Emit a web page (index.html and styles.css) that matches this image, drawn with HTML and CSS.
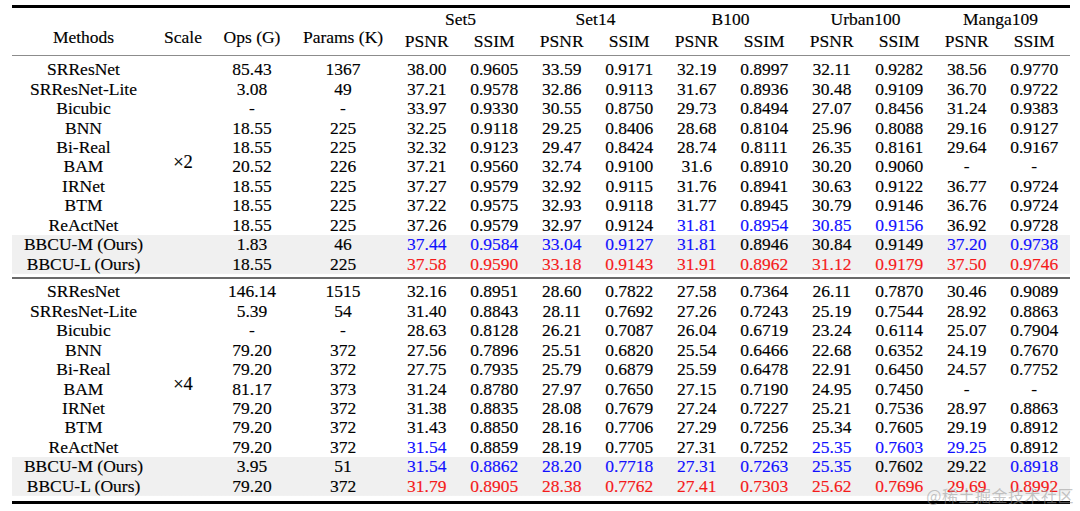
FILE: index.html
```html
<!DOCTYPE html>
<html>
<head>
<meta charset="utf-8">
<link rel="stylesheet" href="styles.css">
</head>
<body>
<div class="page">
  <div class="table">
    <div class="head">
      <div class="hcell h-left c1">Methods</div>
      <div class="hcell h-left c2">Scale</div>
      <div class="hcell h-left c3">Ops (G)</div>
      <div class="hcell h-left c4">Params (K)</div>
      <div class="grp">Set5</div>
      <div class="grp">Set14</div>
      <div class="grp">B100</div>
      <div class="grp">Urban100</div>
      <div class="grp">Manga109</div>
      <div class="sub">PSNR</div><div class="sub">SSIM</div>
      <div class="sub">PSNR</div><div class="sub">SSIM</div>
      <div class="sub">PSNR</div><div class="sub">SSIM</div>
      <div class="sub">PSNR</div><div class="sub">SSIM</div>
      <div class="sub">PSNR</div><div class="sub">SSIM</div>
    </div>

    <div class="block first">
      <div class="scale">×2</div>
      <div>SRResNet</div><div>85.43</div><div>1367</div><div>38.00</div><div>0.9605</div><div>33.59</div><div>0.9171</div><div>32.19</div><div>0.8997</div><div>32.11</div><div>0.9282</div><div>38.56</div><div>0.9770</div>
      <div>SRResNet-Lite</div><div>3.08</div><div>49</div><div>37.21</div><div>0.9578</div><div>32.86</div><div>0.9113</div><div>31.67</div><div>0.8936</div><div>30.48</div><div>0.9109</div><div>36.70</div><div>0.9722</div>
      <div>Bicubic</div><div>-</div><div>-</div><div>33.97</div><div>0.9330</div><div>30.55</div><div>0.8750</div><div>29.73</div><div>0.8494</div><div>27.07</div><div>0.8456</div><div>31.24</div><div>0.9383</div>
      <div>BNN</div><div>18.55</div><div>225</div><div>32.25</div><div>0.9118</div><div>29.25</div><div>0.8406</div><div>28.68</div><div>0.8104</div><div>25.96</div><div>0.8088</div><div>29.16</div><div>0.9127</div>
      <div>Bi-Real</div><div>18.55</div><div>225</div><div>32.32</div><div>0.9123</div><div>29.47</div><div>0.8424</div><div>28.74</div><div>0.8111</div><div>26.35</div><div>0.8161</div><div>29.64</div><div>0.9167</div>
      <div>BAM</div><div>20.52</div><div>226</div><div>37.21</div><div>0.9560</div><div>32.74</div><div>0.9100</div><div>31.6</div><div>0.8910</div><div>30.20</div><div>0.9060</div><div>-</div><div>-</div>
      <div>IRNet</div><div>18.55</div><div>225</div><div>37.27</div><div>0.9579</div><div>32.92</div><div>0.9115</div><div>31.76</div><div>0.8941</div><div>30.63</div><div>0.9122</div><div>36.77</div><div>0.9724</div>
      <div>BTM</div><div>18.55</div><div>225</div><div>37.22</div><div>0.9575</div><div>32.93</div><div>0.9118</div><div>31.77</div><div>0.8945</div><div>30.79</div><div>0.9146</div><div>36.76</div><div>0.9724</div>
      <div>ReActNet</div><div>18.55</div><div>225</div><div>37.26</div><div>0.9579</div><div>32.97</div><div>0.9124</div><div class="b">31.81</div><div class="b">0.8954</div><div class="b">30.85</div><div class="b">0.9156</div><div>36.92</div><div>0.9728</div>
      <div>BBCU-M (Ours)</div><div>1.83</div><div>46</div><div class="b">37.44</div><div class="b">0.9584</div><div class="b">33.04</div><div class="b">0.9127</div><div class="b">31.81</div><div>0.8946</div><div>30.84</div><div>0.9149</div><div class="b">37.20</div><div class="b">0.9738</div>
      <div>BBCU-L (Ours)</div><div>18.55</div><div>225</div><div class="r">37.58</div><div class="r">0.9590</div><div class="r">33.18</div><div class="r">0.9143</div><div class="r">31.91</div><div class="r">0.8962</div><div class="r">31.12</div><div class="r">0.9179</div><div class="r">37.50</div><div class="r">0.9746</div>
    </div>

    <div class="block second">
      <div class="scale">×4</div>
      <div>SRResNet</div><div>146.14</div><div>1515</div><div>32.16</div><div>0.8951</div><div>28.60</div><div>0.7822</div><div>27.58</div><div>0.7364</div><div>26.11</div><div>0.7870</div><div>30.46</div><div>0.9089</div>
      <div>SRResNet-Lite</div><div>5.39</div><div>54</div><div>31.40</div><div>0.8843</div><div>28.11</div><div>0.7692</div><div>27.26</div><div>0.7243</div><div>25.19</div><div>0.7544</div><div>28.92</div><div>0.8863</div>
      <div>Bicubic</div><div>-</div><div>-</div><div>28.63</div><div>0.8128</div><div>26.21</div><div>0.7087</div><div>26.04</div><div>0.6719</div><div>23.24</div><div>0.6114</div><div>25.07</div><div>0.7904</div>
      <div>BNN</div><div>79.20</div><div>372</div><div>27.56</div><div>0.7896</div><div>25.51</div><div>0.6820</div><div>25.54</div><div>0.6466</div><div>22.68</div><div>0.6352</div><div>24.19</div><div>0.7670</div>
      <div>Bi-Real</div><div>79.20</div><div>372</div><div>27.75</div><div>0.7935</div><div>25.79</div><div>0.6879</div><div>25.59</div><div>0.6478</div><div>22.91</div><div>0.6450</div><div>24.57</div><div>0.7752</div>
      <div>BAM</div><div>81.17</div><div>373</div><div>31.24</div><div>0.8780</div><div>27.97</div><div>0.7650</div><div>27.15</div><div>0.7190</div><div>24.95</div><div>0.7450</div><div>-</div><div>-</div>
      <div>IRNet</div><div>79.20</div><div>372</div><div>31.38</div><div>0.8835</div><div>28.08</div><div>0.7679</div><div>27.24</div><div>0.7227</div><div>25.21</div><div>0.7536</div><div>28.97</div><div>0.8863</div>
      <div>BTM</div><div>79.20</div><div>372</div><div>31.43</div><div>0.8850</div><div>28.16</div><div>0.7706</div><div>27.29</div><div>0.7256</div><div>25.34</div><div>0.7605</div><div>29.19</div><div>0.8912</div>
      <div>ReActNet</div><div>79.20</div><div>372</div><div class="b">31.54</div><div>0.8859</div><div>28.19</div><div>0.7705</div><div>27.31</div><div>0.7252</div><div class="b">25.35</div><div class="b">0.7603</div><div class="b">29.25</div><div>0.8912</div>
      <div>BBCU-M (Ours)</div><div>3.95</div><div>51</div><div class="b">31.54</div><div class="b">0.8862</div><div class="b">28.20</div><div class="b">0.7718</div><div class="b">27.31</div><div class="b">0.7263</div><div class="b">25.35</div><div>0.7602</div><div>29.22</div><div class="b">0.8918</div>
      <div>BBCU-L (Ours)</div><div>79.20</div><div>372</div><div class="r">31.79</div><div class="r">0.8905</div><div class="r">28.38</div><div class="r">0.7762</div><div class="r">27.41</div><div class="r">0.7303</div><div class="r">25.62</div><div class="r">0.7696</div><div class="r">29.69</div><div class="r">0.8992</div>
    </div>
  </div>
  <div class="watermark">@稀土掘金技术社区</div>
</div>
</body>
</html>
```

FILE: styles.css
```css
html, body {
  margin: 0;
  padding: 0;
  background: #ffffff;
}

.page {
  position: relative;
  width: 1080px;
  height: 511px;
  overflow: hidden;
  padding-top: 5px;
  box-sizing: border-box;
}

.table {
  margin-left: 12px;
  width: 1058px;
  border-top: 3px solid #000;
  border-bottom: 3px solid #000;
  font-family: "Liberation Serif", "Times New Roman", serif;
  font-size: 17.5px;
  color: #000;
  -webkit-text-stroke: 0.15px currentColor;
}

.head,
.block {
  display: grid;
  grid-template-columns: 143px 56px 82px 100px repeat(10, 67.5px);
  text-align: center;
}

.head {
  grid-template-rows: 22px 22px;
  line-height: 22px;
  padding-bottom: 3px;
  border-bottom: 1px solid #8c8c8c;
}

.hcell {
  grid-row: 1 / 3;
  align-self: end;
  padding-bottom: 5px;
  line-height: 20px;
}

.c1 { grid-column: 1; }
.c2 { grid-column: 2; }
.c3 { grid-column: 3; }
.c4 { grid-column: 4; }

.grp {
  grid-column: span 2;
  grid-row: 1;
}

.sub {
  grid-row: 2;
}

.block {
  grid-template-rows: repeat(11, 19.45px);
  line-height: 19.45px;
  white-space: nowrap;
  background-image: linear-gradient(#f0f0f0, #f0f0f0);
  background-repeat: no-repeat;
  background-origin: content-box;
  background-clip: content-box;
  background-position: left bottom;
  background-size: 100% 38.9px;
}

.block.first {
  padding-top: 4.3px;
  padding-bottom: 3px;
  border-bottom: 2px solid #6a6a6a;
}

.block.second {
  padding-top: 3.3px;
  padding-bottom: 4.7px;
}

.scale {
  grid-column: 2;
  grid-row: 1 / span 11;
  align-self: center;
  padding-bottom: 9px;
  font-size: 18.5px;
}

.b { color: #1010ff; }
.r { color: #f51a1a; }

.watermark {
  position: absolute;
  right: 6px;
  top: 485px;
  font-family: "Noto Sans CJK SC", sans-serif;
  font-size: 16px;
  line-height: 20px;
  color: rgba(150, 150, 150, 0.55);
  letter-spacing: 0.5px;
}
```
